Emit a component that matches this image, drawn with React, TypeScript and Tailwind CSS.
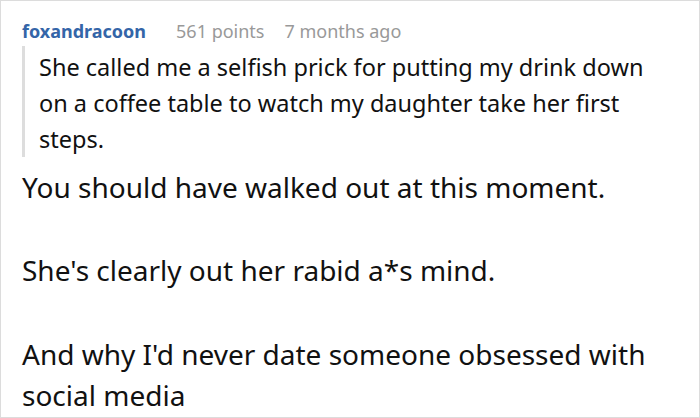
export default function App() {
  return (
    <div className="w-[700px] h-[418px] bg-white border border-[#dcdcdc] overflow-hidden font-['Noto_Sans',sans-serif] text-[#111]">
      <div className="pl-[21px] pt-[16px]">
        <div className="flex items-baseline text-[18px] leading-[28px]">
          <span className="font-bold text-[#3465a8]">foxandracoon</span>
          <span className="ml-[30px] text-[#999]">561 points</span>
          <span className="ml-[20px] text-[#999]">7 months ago</span>
        </div>
        <blockquote className="w-[625px] mt-[1px] pt-[3px] border-l-[3px] border-[#dddddd] pl-[14px] text-[23.5px] leading-[36px]">
          She called me a selfish prick for putting my drink down on a coffee table to watch my daughter take her first steps.
        </blockquote>
        <div className="mt-[10px] text-[28px] leading-[41px]">
          <p>You should have walked out at this moment.</p>
          <p className="mt-[42px]">She's clearly out her rabid a*s mind.</p>
          <p className="mt-[43px]">And why I'd never date someone obsessed with social media</p>
        </div>
      </div>
    </div>
  );
}
